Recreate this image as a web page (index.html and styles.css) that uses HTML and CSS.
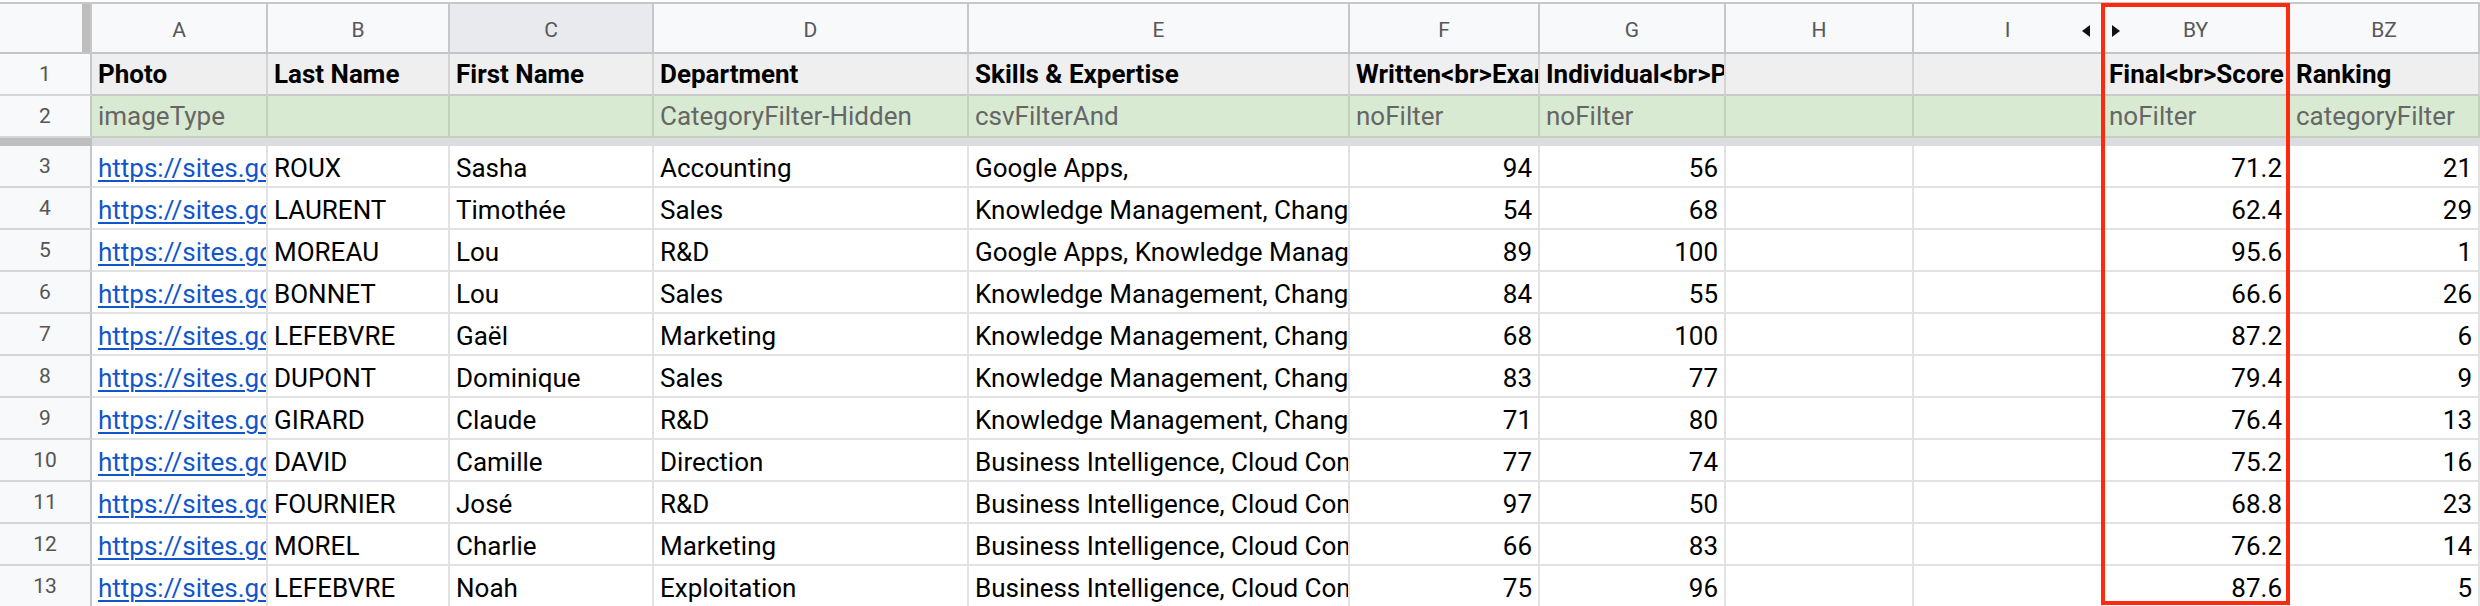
FILE: index.html
```html
<!DOCTYPE html>
<html lang="en">
<head>
<meta charset="utf-8">
<title>Sheet</title>
<link rel="stylesheet" href="styles.css">
</head>
<body>
<div class="sheet">
  <div class="grid">
    <!-- column headers -->
    <div class="corner"></div>
    <div class="colhead">A</div>
    <div class="colhead">B</div>
    <div class="colhead sel">C</div>
    <div class="colhead">D</div>
    <div class="colhead">E</div>
    <div class="colhead">F</div>
    <div class="colhead">G</div>
    <div class="colhead">H</div>
    <div class="colhead">I<span class="tri tri-left"></span></div>
    <div class="colhead">BY<span class="tri tri-right"></span></div>
    <div class="colhead">BZ</div>

    <!-- row 1 -->
    <div class="rowhead">1</div>
    <div class="cell r1">Photo</div>
    <div class="cell r1">Last Name</div>
    <div class="cell r1">First Name</div>
    <div class="cell r1">Department</div>
    <div class="cell r1">Skills &amp; Expertise</div>
    <div class="cell r1">Written&lt;br&gt;Exam</div>
    <div class="cell r1">Individual&lt;br&gt;Presentation</div>
    <div class="cell r1"></div>
    <div class="cell r1"></div>
    <div class="cell r1">Final&lt;br&gt;Score</div>
    <div class="cell r1">Ranking</div>

    <!-- row 2 -->
    <div class="rowhead">2</div>
    <div class="cell r2">imageType</div>
    <div class="cell r2"></div>
    <div class="cell r2"></div>
    <div class="cell r2">CategoryFilter-Hidden</div>
    <div class="cell r2">csvFilterAnd</div>
    <div class="cell r2">noFilter</div>
    <div class="cell r2">noFilter</div>
    <div class="cell r2"></div>
    <div class="cell r2"></div>
    <div class="cell r2">noFilter</div>
    <div class="cell r2">categoryFilter</div>

    <!-- freeze bar -->
    <div class="freeze-left"></div>
    <div class="freeze-right"></div>

    <!-- row 3 -->
    <div class="rowhead">3</div>
    <div class="cell"><span class="link">https://sites.google.com/view/photo-roux</span></div>
    <div class="cell">ROUX</div>
    <div class="cell">Sasha</div>
    <div class="cell">Accounting</div>
    <div class="cell">Google Apps,</div>
    <div class="cell num">94</div>
    <div class="cell num">56</div>
    <div class="cell"></div>
    <div class="cell"></div>
    <div class="cell num">71.2</div>
    <div class="cell num">21</div>

    <!-- row 4 -->
    <div class="rowhead">4</div>
    <div class="cell"><span class="link">https://sites.google.com/view/photo-laurent</span></div>
    <div class="cell">LAURENT</div>
    <div class="cell">Timothée</div>
    <div class="cell">Sales</div>
    <div class="cell">Knowledge Management, Change Management</div>
    <div class="cell num">54</div>
    <div class="cell num">68</div>
    <div class="cell"></div>
    <div class="cell"></div>
    <div class="cell num">62.4</div>
    <div class="cell num">29</div>

    <!-- row 5 -->
    <div class="rowhead">5</div>
    <div class="cell"><span class="link">https://sites.google.com/view/photo-moreau</span></div>
    <div class="cell">MOREAU</div>
    <div class="cell">Lou</div>
    <div class="cell">R&amp;D</div>
    <div class="cell">Google Apps, Knowledge Management</div>
    <div class="cell num">89</div>
    <div class="cell num">100</div>
    <div class="cell"></div>
    <div class="cell"></div>
    <div class="cell num">95.6</div>
    <div class="cell num">1</div>

    <!-- row 6 -->
    <div class="rowhead">6</div>
    <div class="cell"><span class="link">https://sites.google.com/view/photo-bonnet</span></div>
    <div class="cell">BONNET</div>
    <div class="cell">Lou</div>
    <div class="cell">Sales</div>
    <div class="cell">Knowledge Management, Change Management</div>
    <div class="cell num">84</div>
    <div class="cell num">55</div>
    <div class="cell"></div>
    <div class="cell"></div>
    <div class="cell num">66.6</div>
    <div class="cell num">26</div>

    <!-- row 7 -->
    <div class="rowhead">7</div>
    <div class="cell"><span class="link">https://sites.google.com/view/photo-lefebvre</span></div>
    <div class="cell">LEFEBVRE</div>
    <div class="cell">Gaël</div>
    <div class="cell">Marketing</div>
    <div class="cell">Knowledge Management, Change Management</div>
    <div class="cell num">68</div>
    <div class="cell num">100</div>
    <div class="cell"></div>
    <div class="cell"></div>
    <div class="cell num">87.2</div>
    <div class="cell num">6</div>

    <!-- row 8 -->
    <div class="rowhead">8</div>
    <div class="cell"><span class="link">https://sites.google.com/view/photo-dupont</span></div>
    <div class="cell">DUPONT</div>
    <div class="cell">Dominique</div>
    <div class="cell">Sales</div>
    <div class="cell">Knowledge Management, Change Management</div>
    <div class="cell num">83</div>
    <div class="cell num">77</div>
    <div class="cell"></div>
    <div class="cell"></div>
    <div class="cell num">79.4</div>
    <div class="cell num">9</div>

    <!-- row 9 -->
    <div class="rowhead">9</div>
    <div class="cell"><span class="link">https://sites.google.com/view/photo-girard</span></div>
    <div class="cell">GIRARD</div>
    <div class="cell">Claude</div>
    <div class="cell">R&amp;D</div>
    <div class="cell">Knowledge Management, Change Management</div>
    <div class="cell num">71</div>
    <div class="cell num">80</div>
    <div class="cell"></div>
    <div class="cell"></div>
    <div class="cell num">76.4</div>
    <div class="cell num">13</div>

    <!-- row 10 -->
    <div class="rowhead">10</div>
    <div class="cell"><span class="link">https://sites.google.com/view/photo-david</span></div>
    <div class="cell">DAVID</div>
    <div class="cell">Camille</div>
    <div class="cell">Direction</div>
    <div class="cell">Business Intelligence, Cloud Computing</div>
    <div class="cell num">77</div>
    <div class="cell num">74</div>
    <div class="cell"></div>
    <div class="cell"></div>
    <div class="cell num">75.2</div>
    <div class="cell num">16</div>

    <!-- row 11 -->
    <div class="rowhead">11</div>
    <div class="cell"><span class="link">https://sites.google.com/view/photo-fournier</span></div>
    <div class="cell">FOURNIER</div>
    <div class="cell">José</div>
    <div class="cell">R&amp;D</div>
    <div class="cell">Business Intelligence, Cloud Computing</div>
    <div class="cell num">97</div>
    <div class="cell num">50</div>
    <div class="cell"></div>
    <div class="cell"></div>
    <div class="cell num">68.8</div>
    <div class="cell num">23</div>

    <!-- row 12 -->
    <div class="rowhead">12</div>
    <div class="cell"><span class="link">https://sites.google.com/view/photo-morel</span></div>
    <div class="cell">MOREL</div>
    <div class="cell">Charlie</div>
    <div class="cell">Marketing</div>
    <div class="cell">Business Intelligence, Cloud Computing</div>
    <div class="cell num">66</div>
    <div class="cell num">83</div>
    <div class="cell"></div>
    <div class="cell"></div>
    <div class="cell num">76.2</div>
    <div class="cell num">14</div>

    <!-- row 13 -->
    <div class="rowhead">13</div>
    <div class="cell"><span class="link">https://sites.google.com/view/photo-lefebvre-n</span></div>
    <div class="cell">LEFEBVRE</div>
    <div class="cell">Noah</div>
    <div class="cell">Exploitation</div>
    <div class="cell">Business Intelligence, Cloud Computing</div>
    <div class="cell num">75</div>
    <div class="cell num">96</div>
    <div class="cell"></div>
    <div class="cell"></div>
    <div class="cell num">87.6</div>
    <div class="cell num">5</div>
  </div>

  <div class="overlay">
    <div class="highlight"></div>
  </div>
</div>
</body>
</html>
```
FILE: styles.css
```css
html, body {
  margin: 0;
  padding: 0;
  background: #ffffff;
}

body {
  font-family: Roboto, "Liberation Sans", Arial, sans-serif;
  overflow: hidden;
}

.sheet {
  display: grid;
  padding-top: 2px;
  width: 2480px;
}

.grid,
.overlay {
  grid-area: 1 / 1;
  display: grid;
  grid-template-columns: 92px 176px 182px 204px 315px 381px 190px 186px 188px 189px 187px 190px;
}

.grid {
  grid-template-rows: 50px 42px 42px 8px repeat(11, 42px);
  border-top: 2px solid #c7c7c7;
}

.overlay {
  grid-template-rows: 1fr;
  z-index: 2;
  pointer-events: none;
}

/* column header row */
.corner {
  background: #f8f9fa;
  border-right: 2px solid #c7c7c7;
  border-bottom: 2px solid #c4c4c4;
  box-shadow: inset -8px 0 0 #bebebe;
  box-sizing: border-box;
}

.colhead {
  position: relative;
  display: flex;
  align-items: center;
  justify-content: center;
  padding-top: 3px;
  background: #f8f9fa;
  color: #575757;
  font-size: 21px;
  border-right: 2px solid #c7c7c7;
  border-bottom: 2px solid #c4c4c4;
  box-sizing: border-box;
}

.colhead.sel {
  background: #e8eaed;
}

.tri {
  position: absolute;
  top: 21px;
  width: 0;
  height: 0;
  border-top: 6px solid transparent;
  border-bottom: 6px solid transparent;
}

.tri-left {
  right: 11px;
  border-right: 8px solid #111;
}

.tri-right {
  left: 9px;
  border-left: 8px solid #111;
}

/* row header */
.rowhead {
  display: flex;
  align-items: center;
  justify-content: center;
  background: #f8f9fa;
  color: #555;
  font-size: 21px;
  border-right: 2px solid #c7c7c7;
  border-bottom: 2px solid #d6d6d6;
  box-sizing: border-box;
}

/* cells */
.cell {
  display: flex;
  align-items: flex-end;
  justify-content: flex-start;
  padding: 0 6px 3px 6px;
  overflow: hidden;
  white-space: nowrap;
  font-size: 26px;
  line-height: 30px;
  color: #000;
  background: #fff;
  border-right: 2px solid #e2e2e2;
  border-bottom: 2px solid #e2e2e2;
  box-sizing: border-box;
  min-width: 0;
}

.cell.num {
  justify-content: flex-end;
}

.cell.r1 {
  background: #efefef;
  font-weight: 700;
  padding-bottom: 5px;
  border-right-color: #d4d4d4;
  border-bottom-color: #c9c9c9;
}

.cell.r2 {
  background: #d9ead3;
  color: #666666;
  padding-bottom: 5px;
  border-right-color: #c3d2bd;
  border-bottom-color: #c3d0be;
}

.link {
  color: #1155cc;
  text-decoration: underline;
  text-decoration-thickness: 2px;
  text-underline-offset: 3px;
}

/* frozen rows divider */
.freeze-left {
  background: #bebebe;
}

.freeze-right {
  grid-column: 2 / -1;
  background: #dadce0;
}

/* red annotation frame over column BY */
.highlight {
  grid-column: 11;
  grid-row: 1;
  margin: 1px 0 3px -2px;
  border: 4px solid #ff2a0e;
}
```
